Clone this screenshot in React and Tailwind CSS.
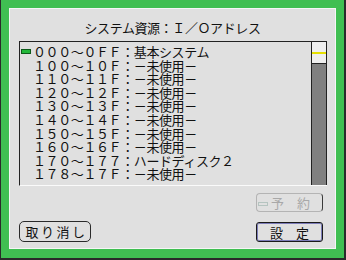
const rows = [
  { text: "０００～０ＦＦ：基本システム", active: true },
  { text: "１００～１０Ｆ：－未使用－" },
  { text: "１１０～１１Ｆ：－未使用－" },
  { text: "１２０～１２Ｆ：－未使用－" },
  { text: "１３０～１３Ｆ：－未使用－" },
  { text: "１４０～１４Ｆ：－未使用－" },
  { text: "１５０～１５Ｆ：－未使用－" },
  { text: "１６０～１６Ｆ：－未使用－" },
  { text: "１７０～１７７：ハードディスク２" },
  { text: "１７８～１７Ｆ：－未使用－" },
]

export default function App() {
  return (
    <div
      className="w-[346px] h-[260px] bg-[#40bf52] border-l border-r-2 border-b-2 border-[#2a2a2a] pl-[8px] pr-[8px] pt-[8px] pb-[9px] text-[#111]"
      style={{ fontFamily: '"Noto Sans CJK JP", "Noto Sans", sans-serif' }}
    >
      <div className="flex h-full flex-col border border-[#f6f6f6] bg-[#e0e0e0]">
        <div className="pt-[11px] text-center text-[13px] leading-[16px] tracking-[-0.4px]">
          システム資源：Ｉ／Ｏアドレス
        </div>

        <div className="ml-[9px] mr-[8px] mt-[5px] flex h-[145px] border-t border-l border-b border-t-[#222] border-l-[#222] border-b-[#fafafa]">
          <div className="flex-1 pt-[3px]">
            {rows.map((r) => (
              <div key={r.text} className="flex h-[13.6px] items-center text-[13px] leading-[13.6px] tracking-[-0.4px]">
                <div className="w-[13px] pl-[1px]">
                  {r.active && <div className="h-[5px] w-[10px] border border-[#0d5a1a] bg-[#22b83a]" />}
                </div>
                <span>{r.text}</span>
              </div>
            ))}
          </div>
          <div className="flex w-[16px] flex-col border-l border-r border-[#222]">
            <div className="flex h-[22px] items-center border-b border-[#222] bg-[#efefef]">
              <div className="h-[2px] w-full bg-[#e6e000]" />
            </div>
            <div className="flex-1 bg-[#808080]" />
          </div>
        </div>

        <div className="mr-[12px] mt-[7px] flex justify-end">
          <div className="relative flex h-[19px] w-[67px] items-center justify-center rounded-[4px] border border-[#b4b4b4] border-r-[#3a3a3a] text-[13px] leading-none text-[#a8a8a8]">
            <svg className="absolute left-[1px] top-[8px]" width="10" height="4" viewBox="0 0 10 4">
              <rect x="0.5" y="0.5" width="9" height="3" fill="none" stroke="#8aa8a0" strokeDasharray="1 1" />
            </svg>
            <span className="pl-[2px]">予　約</span>
          </div>
        </div>

        <div className="ml-[9px] mr-[12px] mt-[9px] flex items-end justify-between">
          <div className="flex h-[21px] w-[72px] items-center justify-center rounded-[5px] border border-[#2a2a2a] text-[13px] leading-none tracking-[2.5px]">
            <span className="pl-[3px]">取り消し</span>
          </div>
          <div className="flex h-[20px] w-[67px] items-center justify-center rounded-[3px] border border-[#1a1a1a] text-[13px] leading-none shadow-[inset_0_0_0_1px_#7c7cb8]">
            設　定
          </div>
        </div>
      </div>
    </div>
  )
}
